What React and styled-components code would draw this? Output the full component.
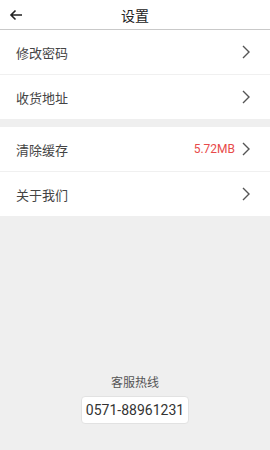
import React from "react";
import styled, { createGlobalStyle } from "styled-components";

const Global = createGlobalStyle`
  html, body { margin: 0; padding: 0; }
  body {
    background: #efefef;
    font-family: Roboto, "Noto Sans CJK SC", sans-serif;
  }
  #root { min-height: 450px; }
`;

const Page = styled.div`
  width: 270px;
  height: 450px;
  display: flex;
  flex-direction: column;
  background: #efefef;
  overflow: hidden;
`;

const Header = styled.header`
  height: 29px;
  flex: none;
  display: grid;
  grid-template-columns: 40px 1fr 40px;
  align-items: center;
  background: #fff;
  border-bottom: 1px solid #c9c9c9;
`;

const Back = styled.div`
  display: flex;
  align-items: center;
  padding-left: 9px;
`;

const Title = styled.h1`
  margin: 0;
  text-align: center;
  font-size: 14px;
  font-weight: normal;
  color: #222;
`;

const Group = styled.div`
  background: #fff;
  margin-bottom: ${(p) => (p.$gap ? "8px" : "0")};
`;

const Row = styled.div`
  height: 44px;
  display: flex;
  align-items: center;
  padding: 0 19px 0 16px;
  border-top: ${(p) => (p.$first ? "none" : "1px solid #f0f0f0")};
`;

const Label = styled.span`
  flex: 1;
  font-size: 13px;
  color: #444;
`;

const Value = styled.span`
  font-size: 12px;
  color: #e84a4a;
  margin-right: 6px;
`;

const Footer = styled.div`
  margin-top: auto;
  margin-bottom: 26px;
  display: flex;
  flex-direction: column;
  align-items: center;
  gap: 6px;
`;

const HotTitle = styled.div`
  font-size: 12px;
  color: #555;
`;

const Phone = styled.div`
  background: #fff;
  border: 1px solid #e2e2e2;
  border-radius: 4px;
  padding: 4px 4px;
  font-size: 14px;
  color: #333;
  line-height: 18px;
`;

const Chevron = () => (
  <svg width="10" height="16" viewBox="0 0 10 16">
    <path d="M2 2 L8 8 L2 14" fill="none" stroke="#555" strokeWidth="1.4" />
  </svg>
);

const Arrow = () => (
  <svg width="14" height="12" viewBox="0 0 14 12">
    <path d="M13 6 H2 M6.5 1.5 L2 6 L6.5 10.5" fill="none" stroke="#222" strokeWidth="1.6" />
  </svg>
);

export default function App() {
  return (
    <Page>
      <Global />
      <Header>
        <Back><Arrow /></Back>
        <Title>设置</Title>
        <span />
      </Header>
      <Group $gap>
        <Row $first><Label>修改密码</Label><Chevron /></Row>
        <Row><Label>收货地址</Label><Chevron /></Row>
      </Group>
      <Group>
        <Row $first><Label>清除缓存</Label><Value>5.72MB</Value><Chevron /></Row>
        <Row><Label>关于我们</Label><Chevron /></Row>
      </Group>
      <Footer>
        <HotTitle>客服热线</HotTitle>
        <Phone>0571-88961231</Phone>
      </Footer>
    </Page>
  );
}
